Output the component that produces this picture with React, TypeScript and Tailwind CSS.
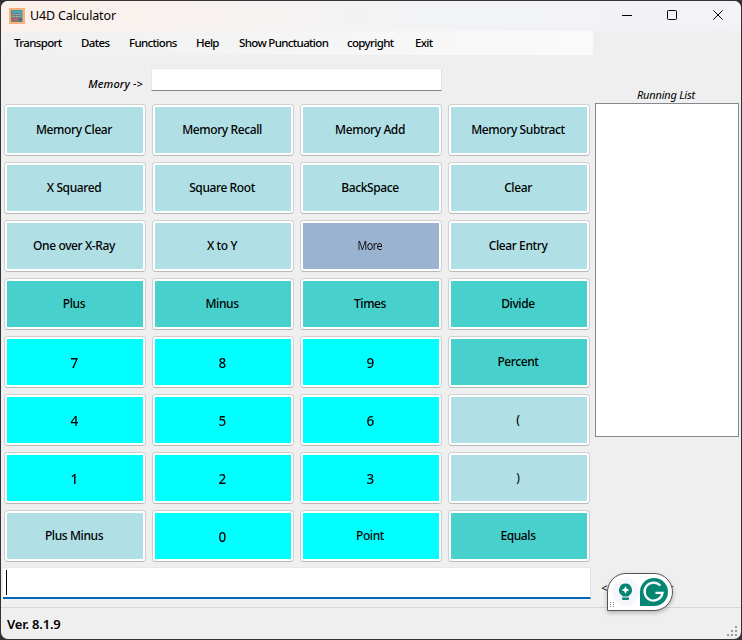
import React from "react";

const LIGHT = "bg-[#b0e0e6]";
const TEAL = "bg-[#48d1cc]";
const AQUA = "bg-[#00ffff]";

const med = "text-[12px] font-medium tracking-[-0.4px]";
const digit = "text-[15px] font-medium scale-x-90";

type Key = { label: string; bg: string; text?: string };

const keys: Key[] = [
  { label: "Memory Clear", bg: LIGHT },
  { label: "Memory Recall", bg: LIGHT },
  { label: "Memory Add", bg: LIGHT },
  { label: "Memory Subtract", bg: LIGHT },
  { label: "X Squared", bg: LIGHT },
  { label: "Square Root", bg: LIGHT },
  { label: "BackSpace", bg: LIGHT },
  { label: "Clear", bg: LIGHT },
  { label: "One over X-Ray", bg: LIGHT },
  { label: "X to Y", bg: LIGHT },
  { label: "More", bg: "bg-[#9ab3d1]", text: "text-[12px] tracking-[-0.5px] scale-x-90 text-[#111]" },
  { label: "Clear Entry", bg: LIGHT },
  { label: "Plus", bg: TEAL },
  { label: "Minus", bg: TEAL },
  { label: "Times", bg: TEAL },
  { label: "Divide", bg: TEAL },
  { label: "7", bg: AQUA, text: digit },
  { label: "8", bg: AQUA, text: digit },
  { label: "9", bg: AQUA, text: digit },
  { label: "Percent", bg: TEAL },
  { label: "4", bg: AQUA, text: digit },
  { label: "5", bg: AQUA, text: digit },
  { label: "6", bg: AQUA, text: digit },
  { label: "(", bg: LIGHT },
  { label: "1", bg: AQUA, text: digit },
  { label: "2", bg: AQUA, text: digit },
  { label: "3", bg: AQUA, text: digit },
  { label: ")", bg: LIGHT, text: "text-[12px]" },
  { label: "Plus Minus", bg: LIGHT },
  { label: "0", bg: AQUA, text: digit },
  { label: "Point", bg: AQUA },
  { label: "Equals", bg: TEAL },
];

const menu = ["Transport", "Dates", "Functions", "Help", "Show Punctuation", "copyright", "Exit"];

function AppIcon() {
  return (
    <svg width="16" height="16" viewBox="0 0 16 16">
      <rect width="16" height="16" fill="#fbb07a" />
      <rect x="2" y="2" width="11.5" height="12" rx="1" fill="#617f88" />
      <rect x="3" y="2.5" width="10" height="2.5" fill="#48a9b7" />
      <path d="M3.500 6.500h2M6.500 6.500h2M9.500 6.500h1.500M3.500 8.500h2M6.500 8.500h2M9.500 8.500h1.500" stroke="#cbb49a" strokeWidth="1.100" />
      <path d="M12.300 4v6" stroke="#2cc1d2" strokeWidth="1" />
      <path d="M3 11.500h6" stroke="#e2574e" strokeWidth="1.800" />
      <path d="M10 11.500h3" stroke="#3d6275" strokeWidth="1.600" />
    </svg>
  );
}

function TitleBar() {
  return (
    <header className="flex h-[30px] shrink-0 items-center bg-linear-to-r from-[#fcf0eb] via-[#f1f3f5] via-60% to-[#f3f2f6] pl-2">
      <AppIcon />
      <h1 className="ml-[5px] flex-1 text-[12.5px] tracking-[-0.15px]">U4D Calculator</h1>
      <svg width="120" height="30" viewBox="0 0 120 30" className="mr-[5px]" fill="none" stroke="#000">
        <path d="M6 14.500h10" />
        <rect x="51.500" y="9.500" width="9" height="9" rx="1" />
        <path d="M97.300 9.300l9.400 9.400M106.700 9.300l-9.400 9.400" />
      </svg>
    </header>
  );
}

function Assistant() {
  return (
    <svg width="80" height="52" viewBox="600 567 80 52" className="absolute left-[599px] top-[566px]">
      <path
        d="M607.500 610.500V592a18.500 18.500 0 0 1 18.500-18.500H654a18.500 18.500 0 0 1 0 37Z"
        fill="#fff"
        stroke="#555"
        className="drop-shadow-[0_2px_2px_rgba(0,0,0,0.25)]"
      />
      <circle cx="626" cy="592" r="14" fill="#f6f7fd" />
      <path d="M625.500 583.500a6.500 6.500 0 0 0-4 11.600l1.300 1.400h5.400l1.300-1.400a6.500 6.500 0 0 0-4-11.600Z" fill="#048675" />
      <path d="M625.500 586l1.200 2.800 2.800 1.200-2.800 1.200-1.200 2.800-1.200-2.800-2.800-1.200 2.800-1.200Z" fill="#fff" />
      <path d="M622 597.500h7v1a1.500 1.500 0 0 1-1.500 1.500h-4a1.500 1.500 0 0 1-1.500-1.500Z" fill="#048675" />
      <path d="M640 606V592a14 14 0 1 1 14 14Z" fill="#048675" />
      <path d="M660.300 585.600a9 9 0 1 0 2.200 7.200H655.500" fill="none" stroke="#fff" strokeWidth="2.300" />
      <path d="M610.500 602v6M613.500 602v6" stroke="#888" strokeWidth="1" strokeDasharray="1 1" />
    </svg>
  );
}

function Grip() {
  return (
    <svg width="14" height="13" viewBox="0 0 14 13" className="self-end" fill="#9b9b9b">
      <rect x="8" y="0" width="2" height="2" />
      <rect x="4" y="4" width="2" height="2" />
      <rect x="8" y="4" width="2" height="2" />
      <rect x="0" y="8" width="2" height="2" />
      <rect x="4" y="8" width="2" height="2" />
      <rect x="8" y="8" width="2" height="2" />
    </svg>
  );
}

export default function App() {
  return (
    <div className="h-[640px] w-[742px] overflow-hidden bg-[#333135] p-px font-['Noto_Sans','Open_Sans',sans-serif] text-black">
      <div className="relative flex h-[638px] w-[740px] flex-col overflow-hidden rounded-[7px] bg-[#efefef] leading-none">
        <TitleBar />
        <div className="flex h-[576px] shrink-0">
          <main className="flex w-[592px] flex-col">
            <nav className="grid h-6 grid-cols-[67px_48px_67px_43px_108px_68px_1fr] items-center bg-linear-to-r from-[#f0f0f0] to-[#fafafa] pl-[13px]">
              {menu.map((m) => (
                <span key={m} className="whitespace-nowrap text-[11.5px] font-medium tracking-[-0.65px]">
                  {m}
                </span>
              ))}
            </nav>
            <div className="flex h-[49px] pt-[13px]">
              <label className="w-[142px] pt-[10px] text-right text-[11px] font-medium italic tracking-[0.15px]">Memory -&gt;</label>
              <div className="ml-[8px] h-[23px] w-[291px] border border-b-[#858585] border-l-[#e8e8e8] border-r-[#e3e3e3] border-t-[#e8e8e8] bg-white" />
            </div>
            <section className="ml-[3px] grid w-[586px] grid-cols-4 gap-[6px]">
              {keys.map((k) => (
                <button
                  key={k.label}
                  className="h-[52px] rounded-[4px] border border-[#d0d0d0] border-b-[#b9b9b9] bg-white p-[2px]"
                >
                  <span className={`flex h-full items-center justify-center pr-[2px] ${k.bg}`}>
                    <span className={`whitespace-nowrap ${k.text ?? med}`}>{k.label}</span>
                  </span>
                </button>
              ))}
            </section>
            <div className="ml-[2px] mt-[5px] flex h-8 w-[588px] border-b-2 border-r border-t border-b-[#0067b8] border-r-[#e3e3e3] border-t-[#e8e8e8] bg-white pl-[3px] pt-[2px]">
              <span className="h-[25px] w-px bg-black" />
            </div>
          </main>
          <aside className="flex flex-col pl-[2px] pt-[58px]">
            <h2 className="h-[14px] w-[142px] text-center text-[11px] italic leading-[11px] tracking-[-0.2px]">Running List</h2>
            <div className="h-[334px] w-[144px] border border-[#828790] bg-white" />
            <div className="mt-[145px] flex w-[78px] justify-between pl-[6px] text-[11px] italic">
              <span>&lt;</span>
              <span>r</span>
            </div>
          </aside>
        </div>
        <footer className="flex flex-1 justify-between border-t border-[#d7d7d7] pl-[6px]">
          <span className="pt-[10px] text-[13px] font-semibold tracking-[-0.2px]">Ver. 8.1.9</span>
          <Grip />
        </footer>
        <Assistant />
      </div>
    </div>
  );
}
